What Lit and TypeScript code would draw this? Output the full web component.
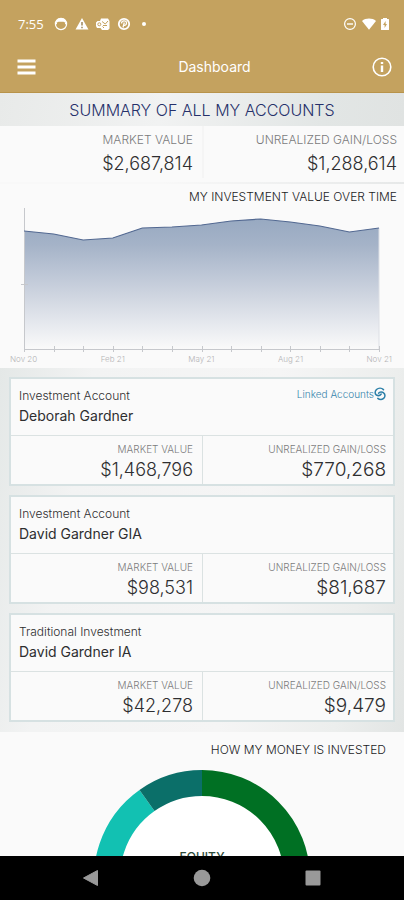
import { LitElement, html, svg, css, nothing } from "lit";
import { customElement, property } from "lit/decorators.js";

interface Account {
  kind: string;
  owner: string;
  value: string;
  gain: string;
  linked?: boolean;
}

const accounts: Account[] = [
  { kind: "Investment Account", owner: "Deborah Gardner", value: "$1,468,796", gain: "$770,268", linked: true },
  { kind: "Investment Account", owner: "David Gardner GIA", value: "$98,531", gain: "$81,687" },
  { kind: "Traditional Investment", owner: "David Gardner IA", value: "$42,278", gain: "$9,479" },
];

@customElement("status-bar")
export class StatusBar extends LitElement {
  static styles = css`
    :host { display: flex; align-items: center; height: 48px; padding: 0 15px 0 18px; color: #fff; }
    .time { font: 400 13px/16px "Open Sans", sans-serif; width: 36px; }
    .icons { display: flex; align-items: center; gap: 7px; flex: 1; }
    .state { display: flex; align-items: center; gap: 5px; }
    svg { display: block; width: 14px; height: 14px; }
    .battery { width: 8px; }
  `;

  render() {
    return html`
      <span class="time">7:55</span>
      <div class="icons">
        <svg viewBox="0 0 14 14" fill="none" stroke="#fff">
          <circle cx="7" cy="7" r="5.6" stroke-width="1.2" />
          <path d="M2 6V4L4 1.5h6L12 4v2L9.500 4.800h-5z" fill="#fff" stroke="none" />
          <path d="M1 6.500h2M11 6.500h2" stroke-width="1.500" />
        </svg>
        <svg viewBox="0 0 14 14">
          <path d="M7 1l6.500 11.600H.5z" fill="#fff" />
          <path d="M7 5v3.600M7 9.800v1.400" stroke="#8f7440" stroke-width="1.300" />
        </svg>
        <svg viewBox="0 0 14 14">
          <path d="M5 1.500h7L13.500 4v7.500L12 13H6l-1.500-2H1L0 9V5.500L1.500 4H4z" fill="#fff" />
          <path d="M6 4.500l3.300 2.500L12 4M7 8.500h4M6.500 9.500L8 11" fill="none" stroke="#c4a25f" />
          <circle cx="3.300" cy="7.300" r="1.500" fill="none" stroke="#c4a25f" />
        </svg>
        <svg viewBox="0 0 14 14" fill="none" stroke="#fff">
          <circle cx="7" cy="7" r="5.200" stroke-width="1.800" />
          <path d="M4.500 6.500c0-3.500 5-3.500 5-.5 0 2.500-2.500 3-3 1.500M7.300 5.500L6 10.500" stroke-width="1.300" />
        </svg>
        <svg viewBox="0 0 14 14"><circle cx="6" cy="7" r="2" fill="#fff" /></svg>
      </div>
      <div class="state">
        <svg viewBox="0 0 14 14" fill="none" stroke="#fff">
          <circle cx="7" cy="7" r="5.400" stroke-width="1.200" />
          <path d="M4 7h6" stroke-width="1.400" />
        </svg>
        <svg viewBox="0 0 14 14"><path d="M0 4c3.800-3.200 10.200-3.200 14 0L7 12.800z" fill="#fff" /></svg>
        <svg class="battery" viewBox="3 0 8 14">
          <path d="M5 1h4v1h1.200a1 1 0 0 1 1 1v9a1 1 0 0 1-1 1H3.800a1 1 0 0 1-1-1V3a1 1 0 0 1 1-1H5z" fill="#fff" />
          <path d="M7.600 4L5 8h1.600v3L9 7H7.600z" fill="#c4a25f" />
        </svg>
      </div>
    `;
  }
}

@customElement("value-chart")
export class ValueChart extends LitElement {
  static styles = css`
    :host { display: block; }
    svg { display: block; width: 100%; }
    .labels { display: flex; justify-content: space-between; padding: 1px 12px 0 10px; color: #b4b4b6; font-size: 8px; line-height: 10px; }
  `;

  private values = [118, 115, 109, 111, 121, 122, 124, 128, 130, 127, 123, 117, 121];

  render() {
    const base = 144;
    const step = 355 / 12;
    const pts = this.values.map((v, i) => `${(24 + i * step).toFixed(1)},${base - v}`);
    const line = "M" + pts.join("L");
    return html`
      <svg viewBox="0 0 404 148" role="img" aria-label="My investment value over time">
        <defs>
          <linearGradient id="fade" x1="0" y1="0" x2="0" y2="1">
            <stop offset="0" stop-color="#98a9c1" />
            <stop offset="0.2" stop-color="#a5b3c8" />
            <stop offset="0.6" stop-color="#d0d6e1" />
            <stop offset="1" stop-color="#fafafa" />
          </linearGradient>
        </defs>
        <path d="${line}L379,${base}L24,${base}Z" fill="url(#fade)" />
        <path d="M379 23V144" stroke="#dcdfe5" />
        <path d="M24.500 3V146M21 79.500H28M24 144.500H379" stroke="#c6c8cc" fill="none" />
        ${this.values.map((_, i) => svg`<path d="M${Math.round(24 + i * step)}.5 141V147" stroke="#c6c8cc" />`)}
        <path d=${line} fill="none" stroke="#526891" stroke-width="1.200" />
      </svg>
      <div class="labels">
        <span>Nov 20</span><span>Feb 21</span><span>May 21</span><span>Aug 21</span><span>Nov 21</span>
      </div>
    `;
  }
}

@customElement("account-card")
export class AccountCard extends LitElement {
  @property({ attribute: false }) account!: Account;

  static styles = css`
    :host { display: block; border: 2px solid #d6e1e2; background: #fafafa; }
    .who { display: flex; justify-content: space-between; padding: 7px 7px 9px 8px; color: #2e2e30; }
    .kind { margin: 0; font-size: 12px; line-height: 20px; }
    .owner { margin: 0; font-weight: 400; font-size: 14px; line-height: 20px; }
    .linked { display: flex; align-items: center; height: 16px; color: #3684ab; font-size: 10px; text-decoration: none; }
    .linked svg { width: 12px; height: 14px; }
    .figures { display: grid; grid-template-columns: 1fr 1fr; border-top: 1px solid #dbe2e2; margin: 0; }
    .figure { padding: 5px 9px 1px; text-align: right; }
    .figure + .figure { border-left: 1px solid #dbe2e2; padding-right: 7px; }
    dt { color: #7a7a7c; font-size: 10px; line-height: 16px; }
    dd { margin: 0; color: #2e2e30; font-size: 18px; line-height: 26px; }
    .figure + .figure dd { font-size: 19px; }
  `;

  render() {
    const a = this.account;
    return html`
      <div class="who">
        <div>
          <p class="kind">${a.kind}</p>
          <h2 class="owner">${a.owner}</h2>
        </div>
        ${a.linked
          ? html`<a class="linked" href="#linked">Linked Accounts<svg viewBox="0 0 12 14" fill="none" stroke="#2b7fa8" stroke-width="1.500" stroke-linecap="round">
              <path d="M9.500 2.600C7.500.6 4.500.7 2.500 2.500.6 4.500.8 7 2.400 8c1.600.9 3.600.6 4.800-1" />
              <path d="M4.600 6.200c1-1.400 3.600-1.500 5-.3 1.600 1.300 1.800 3.600.4 5.200-1.500 1.800-4.300 2-6.200.3" />
            </svg></a>`
          : nothing}
      </div>
      <dl class="figures">
        <div class="figure"><dt>MARKET VALUE</dt><dd>${a.value}</dd></div>
        <div class="figure"><dt>UNREALIZED GAIN/LOSS</dt><dd>${a.gain}</dd></div>
      </dl>
    `;
  }
}

@customElement("app-root")
export class AppRoot extends LitElement {
  static styles = css`
    :host {
      display: flex; flex-direction: column; height: 100vh; overflow: hidden;
      background: #fafafa; color: #2e2e30; font-family: Inter, "Liberation Sans", sans-serif; font-weight: 300;
    }
    header { background: #c4a25f; border-bottom: 1px solid #b8934a; flex: none; }
    .bar { display: grid; grid-template-columns: 40px 1fr auto; align-items: center; height: 44px; padding: 0 12px 6px 17px; box-sizing: border-box; }
    .bar h1 { margin: 0; text-align: center; color: #fff; font-size: 14px; font-weight: 400; line-height: 20px; }
    button { padding: 0; border: 0; background: none; display: block; cursor: pointer; }
    button svg { display: block; width: 20px; height: 20px; }
    main { flex: 1; min-height: 0; overflow: hidden; }
    .title { margin: 0; padding: 7px 0 6px; text-align: center; color: #26306a; font-size: 16px; font-weight: 300; line-height: 20px;
      background: linear-gradient(100deg, #e8eae9, #f1f2f2 40%, #e2e6e5 80%, #e0e3e2); }
    .totals { display: grid; grid-template-columns: 1fr 1fr; margin: 0; padding-bottom: 4px; }
    .total { padding: 4px 9px 0; text-align: right; }
    .total + .total { border-left: 2px solid #f5f5f5; padding-right: 7px; }
    .total dt { color: #7a7a7c; font-size: 12px; line-height: 20px; }
    .total dd { margin: 0; font-size: 18px; line-height: 28px; }
    .trend { border-top: 2px solid; border-image: linear-gradient(90deg, #f8f8f8 40%, #e6e8e8) 1; padding-bottom: 4px; }
    .caption { margin: 0; padding: 5px 7px 0; text-align: right; font-size: 12px; font-weight: 300; line-height: 16px; color: #1c1c1e; }
    .accounts { display: grid; gap: 9px; padding: 9px 9px 10px;
      background: linear-gradient(100deg, #e4e8e7, #f2f3f3 20%, #f5f5f5 60%, #eceeed 85%, #e2e5e4); }
    .invested .caption { padding: 10px 18px 0; }
    .donut { display: grid; justify-items: center; align-items: center; margin-top: 12px; }
    .donut > * { grid-area: 1 / 1; }
    .donut svg { width: 216px; height: 216px; }
    .slice { color: #2c4a38; font-size: 12px; font-weight: 500; line-height: 16px; padding-bottom: 42px; }
    nav { display: flex; justify-content: space-around; align-items: center; flex: none; height: 44px; padding: 0 35px; background: #000; }
  `;

  render() {
    return html`
      <header>
        <status-bar></status-bar>
        <div class="bar">
          <button aria-label="Menu"><svg viewBox="0 0 20 20"><path d="M0.500 4h18M0.500 10h18M0.500 16h18" stroke="#fff" stroke-width="3.200" /></svg></button>
          <h1>Dashboard</h1>
          <button aria-label="Information">
            <svg viewBox="0 0 20 20" fill="none" stroke="#fff"><circle cx="10" cy="10" r="8.800" stroke-width="1.600" /><path d="M10 8.500v6.500M10 5v2" stroke-width="2.400" /></svg>
          </button>
        </div>
      </header>
      <main>
        <h2 class="title">SUMMARY OF ALL MY ACCOUNTS</h2>
        <dl class="totals">
          <div class="total"><dt>MARKET VALUE</dt><dd>$2,687,814</dd></div>
          <div class="total"><dt>UNREALIZED GAIN/LOSS</dt><dd>$1,288,614</dd></div>
        </dl>
        <section class="trend">
          <h3 class="caption">MY INVESTMENT VALUE OVER TIME</h3>
          <value-chart></value-chart>
        </section>
        <section class="accounts">
          ${accounts.map((a) => html`<account-card .account=${a}></account-card>`)}
        </section>
        <section class="invested">
          <h3 class="caption">HOW MY MONEY IS INVESTED</h3>
          <div class="donut">
            <svg viewBox="0 0 216 216" role="img" aria-label="Share of money by asset class">
              <circle cx="108" cy="108" r="83" fill="#fff" />
              <g fill="none" stroke-width="26">
                <path d="M108 13A95 95 0 0 1 108 203" stroke="#007023" />
                <path d="M108 203A95 95 0 0 1 53 30.500" stroke="#12c1b2" />
                <path d="M53 30.500A95 95 0 0 1 108 13" stroke="#0b6f69" />
              </g>
            </svg>
            <span class="slice">EQUITY</span>
          </div>
        </section>
      </main>
      <nav aria-label="System">
        <button aria-label="Back"><svg viewBox="0 0 20 20"><path d="M16.500 2.500v15L2.500 10z" fill="#999" stroke="#999" stroke-linejoin="round" /></svg></button>
        <button aria-label="Home"><svg viewBox="0 0 20 20"><circle cx="10" cy="10" r="8.300" fill="#999" /></svg></button>
        <button aria-label="Recent apps"><svg viewBox="0 0 20 20"><rect x="2.500" y="2.500" width="15" height="15" rx="1" fill="#999" /></svg></button>
      </nav>
    `;
  }
}
